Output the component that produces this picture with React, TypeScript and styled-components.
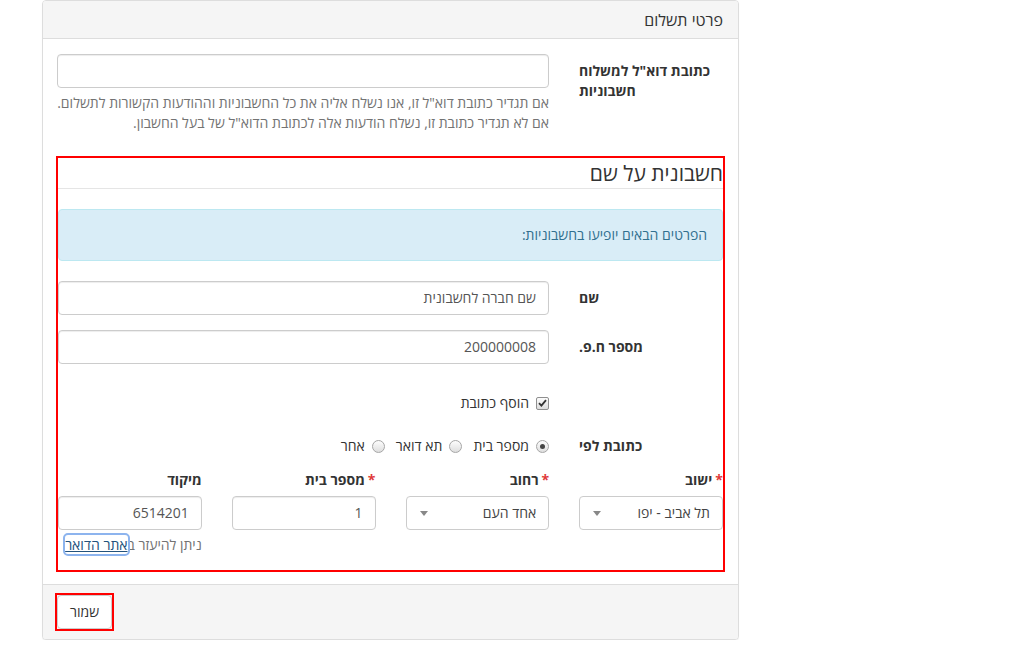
import React from 'react';
import styled, { createGlobalStyle } from 'styled-components';

const GlobalStyle = createGlobalStyle`
  html, body {
    margin: 0;
    padding: 0;
    background: #fff;
  }
  body {
    font-family: "Open Sans", "Noto Sans", "DejaVu Sans", sans-serif;
    font-size: 14px;
    line-height: 20px;
    color: #333;
  }
  * { box-sizing: border-box; }
`;

const Page = styled.div`
  display: flex;
  padding-left: 42px;
`;

const Panel = styled.div`
  direction: rtl;
  width: 697px;
  background: #fff;
  border: 1px solid #ddd;
  border-radius: 4px;
  box-shadow: 0 1px 1px rgba(0, 0, 0, 0.05);
`;

const PanelHeading = styled.div`
  background: #f5f5f5;
  border-bottom: 1px solid #ddd;
  border-radius: 3px 3px 0 0;
  height: 38px;
  padding: 0 15px;
  display: flex;
  align-items: center;
  font-size: 16px;
  color: #333;
`;

const PanelBody = styled.div`
  padding: 15px 15px 12px;
`;

const PanelFooter = styled.div`
  background: #f5f5f5;
  border-top: 1px solid #ddd;
  border-radius: 0 0 3px 3px;
  padding: 8px 15px 8px 12px;
  display: flex;
  justify-content: flex-end;
`;

const FormRow = styled.div<{ $gap?: number }>`
  display: grid;
  grid-template-columns: 144px 1fr;
  column-gap: 30px;
  margin-top: ${(p) => p.$gap ?? 0}px;
`;

const ControlLabel = styled.div<{ $top?: number }>`
  font-weight: bold;
  text-align: left;
  padding-top: ${(p) => p.$top ?? 7}px;
  color: #333;
`;

const TextInput = styled.div`
  height: 34px;
  padding: 6px 12px;
  border: 1px solid #ccc;
  border-radius: 4px;
  background: #fff;
  box-shadow: inset 0 1px 1px rgba(0, 0, 0, 0.075);
  color: #555;
  font-size: 14px;
  line-height: 20px;
  white-space: nowrap;
`;

const HelpBlock = styled.div`
  margin-top: 5px;
  color: #737373;
  white-space: nowrap;
`;

const Fieldset = styled.div`
  border: 2px solid #ff0000;
  margin: 23px -2px 0;
  padding: 0 0 15px;
`;

const Legend = styled.div`
  font-size: 21px;
  line-height: 30px;
  height: 31px;
  color: #333;
  border-bottom: 1px solid #e5e5e5;
`;

const Alert = styled.div`
  margin: 20px 0;
  padding: 15px;
  background: #d9edf7;
  border: 1px solid #bce8f1;
  border-radius: 4px;
  color: #31708f;
`;

const CheckRow = styled.div<{ $top: number }>`
  display: flex;
  align-items: center;
  gap: 11px;
  margin-top: ${(p) => p.$top}px;
  height: 20px;
  color: #333;
`;

const Option = styled.label`
  display: flex;
  align-items: center;
  gap: 7px;
`;

const CheckBox = styled.span`
  width: 13px;
  height: 13px;
  border: 1px solid #8f8f8f;
  border-radius: 2px;
  background: linear-gradient(#fcfcfc, #dcdcdc);
  display: flex;
  align-items: center;
  justify-content: center;
`;

const Radio = styled.span<{ $checked?: boolean }>`
  width: 13px;
  height: 13px;
  border-radius: 50%;
  border: 1px solid #a6a6a6;
  background: linear-gradient(#fdfdfd, #dedede);
  display: flex;
  align-items: center;
  justify-content: center;
  &::after {
    content: '';
    width: 5px;
    height: 5px;
    border-radius: 50%;
    background: ${(p) => (p.$checked ? '#444' : 'transparent')};
  }
`;

const AddressGrid = styled.div`
  display: grid;
  grid-template-columns: repeat(4, 1fr);
  column-gap: 30px;
  margin-top: 14px;
`;

const AddressLabel = styled.div`
  font-weight: bold;
  color: #333;
  margin-bottom: 6px;
`;

const Req = styled.span`
  color: #e03a3a;
  margin-left: 3px;
`;

const SelectBox = styled(TextInput)`
  display: flex;
  align-items: center;
  justify-content: space-between;
  box-shadow: none;
  color: #444;
`;

const Caret = styled.span`
  width: 0;
  height: 0;
  border-top: 5px solid #888;
  border-left: 4px solid transparent;
  border-right: 4px solid transparent;
  margin-left: 1px;
`;

const Link = styled.a`
  color: #23527c;
  text-decoration: underline;
  outline: 2px solid #8db4ee;
  border-radius: 3px;
`;

const SaveHighlight = styled.span`
  border: 2px solid #ff0000;
  display: inline-flex;
`;

const Button = styled.button`
  height: 34px;
  padding: 6px 12px;
  font-family: inherit;
  font-size: 14px;
  line-height: 20px;
  color: #333;
  background: #fff;
  border: 1px solid #ccc;
  border-radius: 4px;
`;

const Check = () => (
  <svg width="9" height="8" viewBox="0 0 9 8">
    <path d="M1 4.2 L3.4 6.6 L8 1.2" fill="none" stroke="#333" strokeWidth="1.8" />
  </svg>
);

export default function App(): React.ReactElement {
  return (
    <Page>
      <GlobalStyle />
      <Panel>
        <PanelHeading>פרטי תשלום</PanelHeading>
        <PanelBody>
          <FormRow>
            <ControlLabel>כתובת דוא"ל למשלוח חשבוניות</ControlLabel>
            <div>
              <TextInput />
              <HelpBlock>
                אם תגדיר כתובת דוא"ל זו, אנו נשלח אליה את כל החשבוניות וההודעות הקשורות לתשלום.
                <br />
                אם לא תגדיר כתובת זו, נשלח הודעות אלה לכתובת הדוא"ל של בעל החשבון.
              </HelpBlock>
            </div>
          </FormRow>

          <Fieldset>
            <Legend>חשבונית על שם</Legend>
            <Alert>הפרטים הבאים יופיעו בחשבוניות:</Alert>

            <FormRow>
              <ControlLabel>שם</ControlLabel>
              <TextInput>שם חברה לחשבונית</TextInput>
            </FormRow>
            <FormRow $gap={15}>
              <ControlLabel>מספר ח.פ.</ControlLabel>
              <TextInput>200000008</TextInput>
            </FormRow>

            <FormRow>
              <div />
              <CheckRow $top={29}>
                <Option>
                  <CheckBox>
                    <Check />
                  </CheckBox>
                  הוסף כתובת
                </Option>
              </CheckRow>
            </FormRow>

            <FormRow $gap={23}>
              <ControlLabel $top={0}>כתובת לפי</ControlLabel>
              <CheckRow $top={0}>
                <Option>
                  <Radio $checked />
                  מספר בית
                </Option>
                <Option>
                  <Radio />
                  תא דואר
                </Option>
                <Option>
                  <Radio />
                  אחר
                </Option>
              </CheckRow>
            </FormRow>

            <AddressGrid>
              <div>
                <AddressLabel>
                  <Req>*</Req>ישוב
                </AddressLabel>
                <SelectBox>
                  <span>תל אביב - יפו</span>
                  <Caret />
                </SelectBox>
              </div>
              <div>
                <AddressLabel>
                  <Req>*</Req>רחוב
                </AddressLabel>
                <SelectBox>
                  <span>אחד העם</span>
                  <Caret />
                </SelectBox>
              </div>
              <div>
                <AddressLabel>
                  <Req>*</Req>מספר בית
                </AddressLabel>
                <TextInput>1</TextInput>
              </div>
              <div>
                <AddressLabel>מיקוד</AddressLabel>
                <TextInput>6514201</TextInput>
                <HelpBlock>
                  ניתן להיעזר ב<Link href="#">אתר הדואר</Link>
                </HelpBlock>
              </div>
            </AddressGrid>
          </Fieldset>
        </PanelBody>
        <PanelFooter>
          <SaveHighlight>
            <Button>שמור</Button>
          </SaveHighlight>
        </PanelFooter>
      </Panel>
    </Page>
  );
}
